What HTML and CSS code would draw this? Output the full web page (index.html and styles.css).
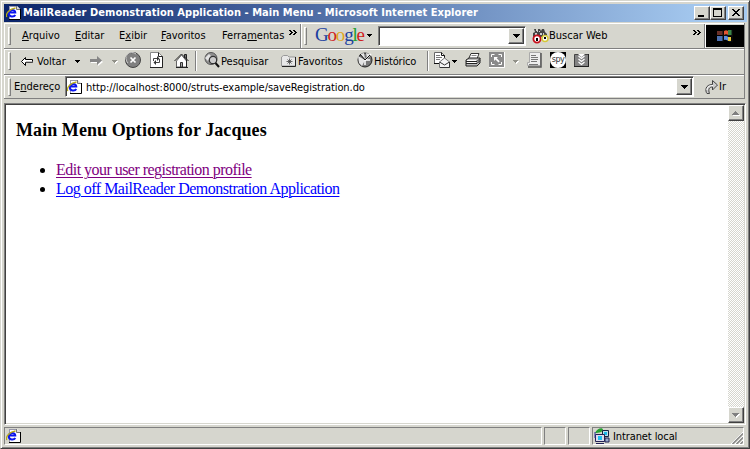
FILE: index.html
```
<!DOCTYPE html>
<html lang="pt">
<head>
<meta charset="utf-8">
<title>MailReader Demonstration Application - Main Menu</title>
<link rel="stylesheet" href="styles.css">
</head>
<body>
<svg width="0" height="0" class="defs">
  <defs>
    <symbol id="page-icon" viewBox="0 0 16 16">
      <path d="M3 1h8l4 4v10H3z" fill="#fff"/>
      <path d="M3.500 1V15M3 1.500h8" stroke="#99a" fill="none"/>
      <path d="M10.500 1v3.500h4" fill="#ddd" stroke="#777"/>
      <path d="M14.500 4v10.500H3" stroke="#000" fill="none"/>
      <path d="M9.300 10C8 12.300 2.800 12.300 2.800 8.300C2.800 4 9.300 3.800 9.300 7.500H4" fill="none" stroke="#0b16ef" stroke-width="2"/>
      <path d="M.8 12C-1 9 4 3.500 9.500 3" fill="none" stroke="#b8ac18" stroke-width="1.300"/>
    </symbol>
    <symbol id="drop" viewBox="0 0 5 3"><path d="M0 0h5v1h-1v1h-1v1h-1v-1h-1v-1h-1z"/></symbol>
    <symbol id="chevrons" viewBox="0 0 8 5"><path d="M0 0h2v1h1v1h1v1h-1v1h-1v1h-2v-1h1v-1h1v-1h-1v-1h-1zM4 0h2v1h1v1h1v1h-1v1h-1v1h-2v-1h1v-1h1v-1h-1v-1h-1z"/></symbol>
  </defs>
</svg>
<div class="window">
  <header class="title">
    <svg class="i16"><use href="#page-icon"/></svg>
    <span class="title-text">MailReader Demonstration Application - Main Menu - Microsoft Internet Explorer</span>
    <span class="caption raised"><svg viewBox="0 0 12 10"><path d="M2 7h6v2H2z"/></svg></span>
    <span class="caption raised"><svg viewBox="0 0 12 10"><path d="M1 0h9v9H1zM2 2v6h7V2z" fill-rule="evenodd"/></svg></span>
    <span class="caption close raised"><svg viewBox="0 0 12 10"><path d="M2 1h2v1h1v1h2V2h1V1h2v1H9v1H8v1H7v1h1v1h1v1h1v1H8V7H7V6H5v1H4v1H2V7h1V6h1V5h1V4H4V3H3V2H2z"/></svg></span>
  </header>

  <nav class="band menu">
    <i class="grip"></i>
    <span class="m-arquivo"><u>A</u>rquivo</span>
    <span class="m-editar"><u>E</u>ditar</span>
    <span class="m-exibir">E<u>x</u>ibir</span>
    <span class="m-favoritos"><u>F</u>avoritos</span>
    <span class="m-ferramentas">Ferra<u>m</u>entas</span>
    <svg class="chev"><use href="#chevrons"/></svg>
    <i class="rule menu-rule"></i>
    <i class="grip google-grip"></i>
    <span class="google"><b class="g-blue">G</b><b class="g-red">o</b><b class="g-yellow">o</b><b class="g-blue">g</b><b class="g-green">l</b><b class="g-red">e</b></span>
    <svg class="drop"><use href="#drop"/></svg>
    <span class="search-box"><span class="combo raised"><svg viewBox="0 0 7 4"><path d="M0 0h7v1H6v1H5v1H4v1H3V3H2V2H1V1H0z"/></svg></span></span>
    <svg class="binoculars" viewBox="0 0 17 16">
      <path d="M2 1h2v2h2V1h2l1 2 1-2h2l1 3 2 2v3H1V5l2-1z" fill="#444"/>
      <path d="M3 5h2v2H3zM8 5h2v2H8zM5 3h1v1H5zM11 5h1v2h-1zM7 3h1v1H7z" fill="#ccc"/>
      <circle cx="5" cy="11" r="3.600" fill="#fff" stroke="#c8101c" stroke-width="1.800"/>
      <circle cx="13" cy="10.500" r="3" fill="#fff" stroke="#d4c838" stroke-width="1.500"/>
      <path d="M4 10h2v3H4zM12 9h2v2h-2z"/>
    </svg>
    <span class="m-buscar">Buscar Web</span>
    <svg class="chev"><use href="#chevrons"/></svg>
    <i class="rule throb-rule"></i>
    <span class="throbber"><svg viewBox="0 0 18 16">
      <path d="M1 3h6v4H1z" fill="#6a3028"/><path d="M8 3c3-2 4 1 7 0v4c-3 1-4-2-7 0z" fill="#e45632"/><path d="M12 2h4v5h-4z" fill="#388448"/>
      <path d="M1 8h6v5H1z" fill="#4c70b0"/><path d="M8 8c3-1 4 2 7 1v4c-3 1-4-2-7-1z" fill="#5d8de0"/><path d="M12 9h3v4h-3z" fill="#e8c638"/>
      <path d="M7 2v12M7.500 7.500h9M16 2v12" stroke="#111" fill="none"/>
    </svg></span>
  </nav>

  <div class="band tools">
    <i class="grip"></i>
    <svg class="back" viewBox="0 0 13 9"><path d="M4.500.5v2h7v3h-7v3L.5 4.500z" fill="#fff" stroke="#000"/><path d="M5 5h7" stroke="#888"/></svg>
    <span class="t-voltar">Voltar</span>
    <svg class="drop t-drop1"><use href="#drop"/></svg>
    <svg class="forward" viewBox="0 0 14 11"><path d="M1 5h7V2l5 4-5 4V7H1z" fill="#fff"/><path d="M0 3h7V0l5 4.500L7 9V6H0z" fill="#868686"/></svg>
    <svg class="drop off t-drop2"><use href="#drop"/></svg>
    <svg class="stop" viewBox="0 0 16 16"><circle cx="8" cy="8" r="7.500" fill="#808080" stroke="#444"/><path d="M3 11A6 6 0 0 1 11 2" stroke="#ccc" fill="none"/><path d="M5.500 5.500l5 5M10.500 5.500l-5 5" stroke="#fff" stroke-width="1.700"/></svg>
    <svg class="refresh" viewBox="0 0 13 16"><path d="M.5.5h8l4 4v11H.5z" fill="#fff" stroke="#888"/><path d="M8.500.5v4h4v11H0" fill="none" stroke="#222"/><path d="M3.500 9V6.500h4M9.500 7v3.500H5" fill="none" stroke="#444"/><path d="M7 4v5L9.500 6.500zM6 8v5L3.500 10.500z" fill="#333"/></svg>
    <svg class="home" viewBox="0 0 15 15"><path d="M10.500 1.500h2v5h-2z" fill="#777" stroke="#222"/><path d="M2.500 8l5-6L12.500 8v6h-10z" fill="#fff" stroke="#666"/><path d="M.5 8L7.500 1l7 7" fill="none" stroke="#222"/><path d="M6.500 9.500h2V14h-2z" fill="#aaa" stroke="#333"/><path d="M2 14.500h12M12.500 7v7" stroke="#222"/></svg>
    <i class="rule t-rule1"></i>
    <svg class="search" viewBox="0 0 16 16"><circle cx="7" cy="6.500" r="6" fill="#909090" stroke="#555"/><path d="M1 6l4-4 2 2-3 5zM8 1l4 2" fill="#e4e4e4"/><circle cx="9" cy="8" r="3.700" fill="#ccc" stroke="#333" stroke-width="1.200"/><path d="M11.500 11L15 15" stroke="#111" stroke-width="2"/></svg>
    <span class="t-pesquisar">Pesquisar</span>
    <svg class="favs" viewBox="0 0 15 12"><path d="M.5 11V2l2-1.500h4L8 2h6.500v9z" fill="#e8e8e8" stroke="#999"/><path d="M14.500 2v9.500H1" fill="none" stroke="#222"/><path d="M8.500 3.500v6M5.500 6.500h6M6.500 4.500l4 4M10.500 4.500l-4 4" stroke="#444" stroke-width=".8"/></svg>
    <span class="t-favoritos">Favoritos</span>
    <svg class="history" viewBox="0 0 16 16"><circle cx="8" cy="8" r="7" fill="#777" stroke="#222"/><path d="M1 4l7 4-3 6-3-3zM9 1l4 1-3 4zM3 2l4-1 1 6z" fill="#e4e4e4"/><path d="M8 8l6-6M8 8h5M8 8v5" stroke="#fff" stroke-width="1.500"/><path d="M3 2L8 8l5-5" stroke="#111" fill="none"/></svg>
    <span class="t-historico">Histórico</span>
    <i class="rule t-rule2"></i>
    <svg class="mail" viewBox="0 0 17 16"><path d="M.5.5h7l3 3v8H.5z" fill="#fff" stroke="#666"/><path d="M7.500.5v3h3v3M0 11.500h5" fill="none" stroke="#111"/><path d="M2 3.500h4M2 5.500h6M2 7.500h4" stroke="#777"/><path d="M5.500 10L10.500 6l5 4v5.500h-10z" fill="#f6f6f6" stroke="#777"/><path d="M5.500 10l5 3 5-3v5.500H6" fill="none" stroke="#333"/></svg>
    <svg class="drop t-drop3"><use href="#drop"/></svg>
    <svg class="print" viewBox="0 0 16 14"><path d="M3.500 6L6 .5h8L12 6z" fill="#fff" stroke="#333"/><path d="M1 7l3-2h11v5l-3 3H1z" fill="#bbb" stroke="#222"/><path d="M1 8.500h11l3-3M1 10.500h11l3-3" fill="none" stroke="#222"/><path d="M6.500 2.500h5" stroke="#888"/><path d="M2 9.500h9M2 7.500h9" stroke="#fff"/></svg>
    <svg class="full" viewBox="0 0 16 16"><path d="M0 0h15v15H0z" fill="#8a8a8a"/><path d="M2.500 5V2.500h3M9.500 2.500h3V5M2.500 10v2.500h3M9.500 12.500h3V10" fill="none" stroke="#fff"/><path d="M5 9V5h4L7.700 6.300l3 3-1.200 1.200-3-3z" fill="#fff"/><path d="M15.500 0v15.500H0" fill="none" stroke="#fff"/></svg>
    <svg class="drop off t-drop4"><use href="#drop"/></svg>
    <svg class="notes" viewBox="0 0 15 16"><path d="M2.500.5h11v13H.5v-3h2z" fill="#eee" stroke="#aaa"/><path d="M14 1v14H1" fill="none" stroke="#555" stroke-width="1.500"/><path d="M4 3.500h5M4 5.500h7M4 7.500h7M4 9.500h6M2 12.500h9" stroke="#777"/></svg>
    <span class="spy"><span>spy</span></span>
    <svg class="downloads" viewBox="0 0 15 15"><path d="M.5 1.500h14v12H.5z" fill="#848484" stroke="#444"/><path d="M4 1h7l-3.500 3z" fill="#fff"/><path d="M4.500 3l3 2.500 3-2.500M4.500 6l3 2.500 3-2.500M4.500 9l3 2.500 3-2.500" fill="none" stroke="#fff" stroke-width="1.200"/><path d="M0 13.500h15M14.500 1v13" stroke="#222"/></svg>
  </div>

  <div class="band address">
    <i class="grip"></i>
    <span class="a-label">E<u>n</u>dereço</span>
    <span class="field">
      <svg class="i16"><use href="#page-icon"/></svg>
      <span class="url">http://localhost:8000/struts-example/saveRegistration.do</span>
      <span class="combo raised"><svg viewBox="0 0 7 4"><path d="M0 0h7v1H6v1H5v1H4v1H3V3H2V2H1V1H0z"/></svg></span>
    </span>
    <svg class="go" viewBox="0 0 13 14"><path d="M2 13.500C0 11 0 4.500 7.500 4.500V.5l5 4.500-5 5V7C4 7 3 9.500 4.500 13.500z" fill="#ccc" stroke="#444"/><path d="M2 10C2 7 4 5.500 8 5.500" fill="none" stroke="#fff"/></svg>
    <span class="a-go">Ir</span>
  </div>

  <div class="view">
    <main class="document">
      <h3><span class="heading">Main Menu Options for Jacques</span></h3>
      <ul>
        <li><a class="visited" href="#">Edit your user registration profile</a></li>
        <li><a class="logoff" href="#">Log off MailReader Demonstration Application</a></li>
      </ul>
    </main>
    <div class="scroll">
      <span class="raised"><svg viewBox="0 0 8 5"><path d="M4 1h1v1h1v1h1v1h1v1H1V4h1V3h1V2h1z" fill="#fff"/><path d="M3 0h1v1h1v1h1v1h1v1H0V3h1V2h1V1h1z" fill="#808080"/></svg></span>
      <span class="raised"><svg viewBox="0 0 8 5"><path d="M1 1h7v1H7v1H6v1H5v1H4V4H3V3H2V2H1z" fill="#fff"/><path d="M0 0h7v1H6v1H5v1H4v1H3V3H2V2H1V1H0z" fill="#808080"/></svg></span>
    </div>
  </div>

  <footer class="status">
    <span class="pane main-pane"><svg class="i16"><use href="#page-icon"/></svg></span>
    <span class="pane small"></span>
    <span class="pane small"></span>
    <span class="pane zone">
      <svg class="i16" viewBox="0 0 16 16"><path d="M1 5c2-5 8-6 8-3 0 2-4 3-8 3z" fill="#25a030"/><path d="M8.500 2.500h6v6h-6z" fill="#bde" stroke="#124"/><path d="M10 4h3v3h-3z" fill="#18b8e8"/><path d="M1.500 6.500h9v7h-9z" fill="#dde" stroke="#225"/><path d="M4 8h4v4H4z" fill="#20c0f0"/><path d="M2 15.500h8M11 10h4v4h-4z" stroke="#225" fill="#9ac"/><path d="M1 4v6" stroke="#339"/></svg>
      <span class="zone-text">Intranet local</span>
      <svg class="size-grip" viewBox="0 0 12 12"><path d="M0 12L12 0M4 12l8-8M8 12l4-4" stroke="#fff" stroke-width="1"/><path d="M1.500 12L12 1.500M5.500 12L12 5.500M9.500 12L12 9.500" stroke="#888" stroke-width="1.500"/></svg>
    </span>
  </footer>
</div>
</body>
</html>
```
FILE: styles.css
```
* { box-sizing: border-box; }
body { margin: 0; overflow: hidden; background: #d6d6ce; color: #000; }
.defs { display: block; height: 0; }
svg, i { display: block; flex: none; }
.window {
  width: 750px; height: 449px; padding: 3px 2px 2px 3px;
  border: 1px solid; border-color: #d6d6ce #404040 #404040 #d6d6ce;
  box-shadow: inset 1px 1px #fff, inset -1px -1px #808080;
  font: 11px/14px "DejaVu Sans Condensed", "DejaVu Sans", sans-serif;
  display: flex; flex-direction: column; white-space: nowrap;
}
.window span { flex: none; }
.i16 { width: 16px; height: 16px; }
.raised {
  display: flex; align-items: center; justify-content: center; background: #d6d6ce;
  border: 1px solid; border-color: #fff #404040 #404040 #fff;
  box-shadow: inset -1px -1px #808080;
}
.title {
  height: 18px; flex: none; display: flex; align-items: center; padding: 0 2px;
  background: linear-gradient(90deg, #0a246a, #a6caf0 95%); color: #fff;
}
.title-text { width: 671px; padding-left: 1px; margin-right: 1px; font-weight: bold; letter-spacing: .05px; }
.caption { width: 16px; height: 14px; }
.caption svg { width: 12px; height: 10px; }
.close { margin-left: 2px; }

.band {
  display: flex; align-items: center; flex: none; width: 741px;
  border-right: 1px solid #808080; border-bottom: 1px solid #808080;
  box-shadow: inset 0 1px #fff, inset 1px 0 #fff; padding-left: 4px;
}
.grip { width: 3px; height: 18px; border: 1px solid; border-color: #fff #808080 #808080 #fff; }
.rule { width: 2px; border-left: 1px solid #808080; border-right: 1px solid #fff; }
u { text-underline-offset: 1px; text-decoration-thickness: 1px; }
.menu { height: 26px; margin-top: 1px; }
.menu > span { padding-top: 1px; }
.m-arquivo { width: 53px; margin-left: 11px; }
.m-editar { width: 44px; }
.m-exibir { width: 42px; }
.m-favoritos { width: 61px; }
.m-ferramentas { width: 67px; }
.chev { width: 8px; height: 5px; margin-bottom: 6px; }
.menu-rule { height: 24px; margin-left: 3px; }
.google-grip { margin-left: 2px; }
.menu > .google { width: 52px; margin-left: 8px; padding: 0 0 2px; font: 19px/20px "Liberation Serif", serif; letter-spacing: -1.2px; }
.google b { font-weight: normal; }
.g-blue { color: #1a3fa0; } .g-red { color: #d02020; } .g-yellow { color: #e0a820; } .g-green { color: #20a030; }
.drop { width: 5px; height: 3px; }
.off { fill: #909088; filter: drop-shadow(1px 1px #fff); }
.menu > .search-box {
  width: 148px; height: 20px; margin-left: 6px; display: flex; justify-content: flex-end;
  background: #fff; border: 1px solid; border-color: #808080 #fff #fff #808080;
  box-shadow: inset 1px 1px #404040; padding: 1px;
}
.combo { width: 16px; height: 100%; }
.combo svg { width: 7px; height: 4px; }
.binoculars { width: 17px; height: 16px; margin-left: 6px; }
.m-buscar { width: 144px; }
.throb-rule { height: 24px; margin-left: 3px; }
.menu > .throbber { width: 38px; height: 22px; padding: 0; background: #000; display: flex; align-items: center; justify-content: center; }
.throbber svg { width: 18px; height: 16px; }

.tools { height: 26px; padding-bottom: 1px; }
.back { width: 13px; height: 9px; margin-left: 10px; }
.t-voltar, .t-pesquisar, .t-favoritos, .t-historico { padding-top: 2px; }
.t-voltar { width: 38px; margin-left: 3px; }
.forward { width: 14px; height: 11px; margin-left: 10px; }
.t-drop2 { margin-left: 8px; }
.stop { width: 16px; height: 16px; margin-left: 8px; margin-bottom: 2px; }
.refresh { width: 13px; height: 16px; margin-left: 9px; margin-bottom: 2px; }
.home { width: 15px; height: 15px; margin-left: 11px; margin-bottom: 2px; }
.t-rule1, .t-rule2 { height: 20px; }
.t-rule1 { margin-left: 6px; }
.search { width: 16px; height: 16px; margin-left: 7px; margin-bottom: 2px; }
.t-pesquisar { width: 60px; margin-left: 1px; }
.favs { width: 15px; height: 12px; }
.t-favoritos { width: 59px; margin-left: 2px; }
.history { width: 16px; height: 16px; margin-bottom: 2px; }
.t-historico { width: 53px; margin-left: 1px; letter-spacing: -.15px; }
.mail { width: 17px; height: 16px; margin-left: 5px; margin-bottom: 2px; }
.t-drop3 { margin-left: 1px; }
.print { width: 16px; height: 14px; margin-left: 8px; margin-bottom: 2px; }
.full { width: 16px; height: 16px; margin-left: 8px; margin-bottom: 2px; }
.t-drop4 { margin-left: 8px; }
.notes { width: 15px; height: 16px; margin-left: 9px; margin-bottom: 2px; }
.spy { width: 16px; height: 16px; margin-left: 8px; margin-bottom: 2px; background: #000; display: flex; }
.spy span { width: 16px; height: 16px; border-radius: 50%; background: #fff; color: #333; font-size: 9px; line-height: 14px; text-align: center; letter-spacing: -.5px; }
.downloads { width: 15px; height: 15px; margin-left: 8px; margin-bottom: 2px; }

.address { height: 24px; }
.a-label { width: 51px; margin-left: 3px; padding-top: 1px; }
.field {
  width: 629px; height: 21px; display: flex; align-items: center; background: #fff;
  border: 1px solid; border-color: #808080 #fff #fff #808080;
  box-shadow: inset 1px 1px #404040; padding: 1px;
}
.url { width: 593px; padding-left: 3px; padding-top: 2px; letter-spacing: -.07px; }
.go { width: 13px; height: 14px; margin-left: 11px; }
.a-go { margin-left: 1px; padding-top: 1px; }

.view {
  height: 322px; flex: none; width: 742px; margin-top: 4px; display: flex; background: #fff;
  border: 1px solid; border-color: #808080 #fff #fff #808080;
  box-shadow: inset 1px 1px #404040, inset -1px -1px #d6d6ce; padding: 1px;
}
.document { width: 722px; padding-left: 10px; font: 16px/19px "Liberation Serif", serif; white-space: normal; }
.document h3 { margin: 15px 0 19px; font-size: 18px; line-height: 21px; letter-spacing: .07px; }
.document ul { margin: 0; padding-left: 40px; }
a { color: #00f; text-underline-offset: 2px; text-decoration-thickness: 1px; }
.visited { color: #800080; letter-spacing: -.53px; }
.logoff { letter-spacing: -.5px; }
.scroll {
  width: 16px; display: flex; flex-direction: column; justify-content: space-between;
  background: repeating-conic-gradient(#fff 0 25%, #d6d6ce 0 50%) 0 0 / 2px 2px;
}
.scroll .raised { height: 16px; }
.scroll svg { width: 8px; height: 5px; }

.status { display: flex; flex: none; margin-top: 2px; gap: 2px; height: 18px; width: 742px; }
.pane { display: flex; align-items: center; border: 1px solid; border-color: #808080 #fff #fff #808080; }
.main-pane { width: 538px; padding-left: 1px; }
.small { width: 22px; }
.zone { width: 152px; padding-left: 1px; }
.zone-text { width: 118px; margin-left: 3px; padding-top: 1px; letter-spacing: -.1px; }
.size-grip { width: 12px; height: 12px; align-self: flex-end; }
```
